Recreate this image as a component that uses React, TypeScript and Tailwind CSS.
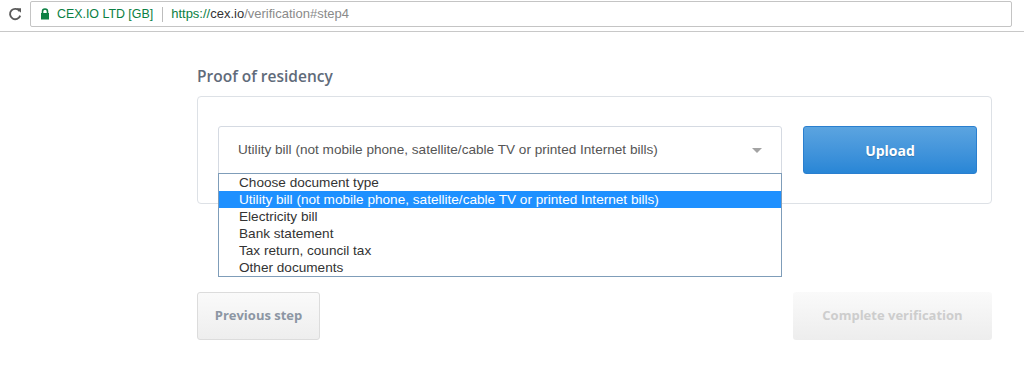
// 下拉選項
const options = [
  "Choose document type",
  "Utility bill (not mobile phone, satellite/cable TV or printed Internet bills)",
  "Electricity bill",
  "Bank statement",
  "Tax return, council tax",
  "Other documents",
];

const App = () => {
  const selected = 1;

  return (
    <div className="w-[1024px] h-[368px] bg-white overflow-hidden font-['Open_Sans',sans-serif]">
      {/* browser toolbar */}
      <div className="h-[32px] flex items-start border-b border-[#c8c8c8]">
        <div className="w-[30px] h-[28px] flex items-center justify-center">
          <svg width="14" height="14" viewBox="0 0 14 14">
            <path d="M11.6 4.2A5.2 5.2 0 1 0 12.2 8.6" fill="none" stroke="#5a5a5a" strokeWidth="1.9" />
            <path d="M8.4 1.2L13 1.2 13 5.8Z" fill="#5a5a5a" />
          </svg>
        </div>
        <div className="mt-[1px] w-[982px] h-[26px] flex items-center border border-[#c4c4c4] rounded-[2px] bg-white pl-[9px] font-['Liberation_Sans',Arial,sans-serif] text-[13px]">
          <svg width="10" height="12" viewBox="0 0 10 12" className="mr-[7px]">
            <path d="M2.5 5V3.5a2.5 2.5 0 0 1 5 0V5" fill="none" stroke="#0b8043" strokeWidth="1.6" />
            <rect x="1" y="5" width="8" height="6.5" fill="#0b8043" />
          </svg>
          <span className="text-[#0b8043] text-[12.4px]">CEX.IO LTD [GB]</span>
          <span className="ml-[9px] mr-[8px] w-px h-[15px] bg-[#bdbdbd]" />
          <span className="text-[#0b8043]">https://</span>
          <span className="text-[#333]">cex.io</span>
          <span className="text-[#8a8a8a]">/verification#step4</span>
        </div>
      </div>

      {/* main */}
      <div className="ml-[197px] w-[795px] pt-[32px]">
        <h3 className="h-[24px] leading-[24px] text-[15.5px] font-semibold text-[#5f6b7a]">
          Proof of residency
        </h3>
        {/* card */}
        <div className="mt-[8px] h-[108px] border border-[#dde1e6] rounded-[4px] flex items-start pt-[29px] pl-[20px] gap-[21px]">
          <div className="relative">
            <div className="w-[564px] h-[48px] border border-[#d5dae2] rounded-t-[3px] flex items-center justify-between pl-[19px] pr-[19px] font-['Liberation_Sans',Arial,sans-serif] text-[13.6px] text-[#555]">
              <span>{options[selected]}</span>
              <span className="w-0 h-0 border-l-[5px] border-r-[5px] border-t-[5px] border-l-transparent border-r-transparent border-t-[#a3a3a3]" />
            </div>
            {/* dropdown list */}
            <div className="absolute z-10 left-0 top-[47px] w-[564px] bg-white border border-[#7f9db9] font-['Liberation_Sans',Arial,sans-serif] text-[13.6px]">
              {options.map((v, i) => (
                <div
                  key={i}
                  className={
                    i === selected
                      ? "h-[17px] leading-[17px] pl-[20px] bg-[#1e90ff] text-white"
                      : "h-[17px] leading-[17px] pl-[20px] text-[#333]"
                  }
                >
                  {v}
                </div>
              ))}
            </div>
          </div>
          <button className="w-[174px] h-[48px] rounded-[3px] border border-[#2a7fcf] bg-gradient-to-b from-[#5ba4e0] to-[#2886d6] text-white text-[14px] font-bold [text-shadow:0_1px_1px_rgba(0,0,0,0.2)]">
            Upload
          </button>
        </div>

        {/* buttons */}
        <div className="mt-[88px] flex justify-between">
          <button className="w-[123px] h-[48px] rounded-[3px] border border-[#dcdcdc] bg-gradient-to-b from-[#fafafa] to-[#eeeeee] text-[13px] font-bold text-[#8c96a3]">
            Previous step
          </button>
          <button className="w-[199px] h-[48px] rounded-[3px] bg-gradient-to-b from-[#fafafa] to-[#ededed] text-[13px] font-bold text-[#cdcdcd]">
            Complete verification
          </button>
        </div>
      </div>
    </div>
  );
};

export default App;
